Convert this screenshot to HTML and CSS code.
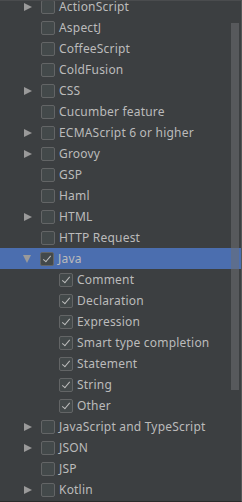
FILE: index.html
```html
<!DOCTYPE html>
<html>
<head>
  <link rel="stylesheet" href="styles.css">
</head>
<body>
  <div class="panel">
    <div class="tree">
      <div class="row"><span class="arrow right"></span><span class="box"></span><span class="label">ActionScript</span></div>
      <div class="row"><span class="arrow"></span><span class="box"></span><span class="label">AspectJ</span></div>
      <div class="row"><span class="arrow"></span><span class="box"></span><span class="label">CoffeeScript</span></div>
      <div class="row"><span class="arrow"></span><span class="box"></span><span class="label">ColdFusion</span></div>
      <div class="row"><span class="arrow right"></span><span class="box"></span><span class="label">CSS</span></div>
      <div class="row"><span class="arrow"></span><span class="box"></span><span class="label">Cucumber feature</span></div>
      <div class="row"><span class="arrow right"></span><span class="box"></span><span class="label">ECMAScript 6 or higher</span></div>
      <div class="row"><span class="arrow right"></span><span class="box"></span><span class="label">Groovy</span></div>
      <div class="row"><span class="arrow"></span><span class="box"></span><span class="label">GSP</span></div>
      <div class="row"><span class="arrow"></span><span class="box"></span><span class="label">Haml</span></div>
      <div class="row"><span class="arrow right"></span><span class="box"></span><span class="label">HTML</span></div>
      <div class="row"><span class="arrow"></span><span class="box"></span><span class="label">HTTP Request</span></div>
      <div class="row selected"><span class="arrow down"></span><span class="box checked"></span><span class="label">Java</span></div>
      <div class="row child"><span class="box checked"></span><span class="label">Comment</span></div>
      <div class="row child"><span class="box checked"></span><span class="label">Declaration</span></div>
      <div class="row child"><span class="box checked"></span><span class="label">Expression</span></div>
      <div class="row child"><span class="box checked"></span><span class="label">Smart type completion</span></div>
      <div class="row child"><span class="box checked"></span><span class="label">Statement</span></div>
      <div class="row child"><span class="box checked"></span><span class="label">String</span></div>
      <div class="row child"><span class="box checked"></span><span class="label">Other</span></div>
      <div class="row"><span class="arrow right"></span><span class="box"></span><span class="label">JavaScript and TypeScript</span></div>
      <div class="row"><span class="arrow right"></span><span class="box"></span><span class="label">JSON</span></div>
      <div class="row"><span class="arrow"></span><span class="box"></span><span class="label">JSP</span></div>
      <div class="row"><span class="arrow right"></span><span class="box"></span><span class="label">Kotlin</span></div>
    </div>
    <div class="scroll-thumb"></div>
  </div>
</body>
</html>
```

FILE: styles.css
```css
:root {
  --bg: #3c3f41;
  --text: #bbbbbb;
  --selected: #4b6eaf;
  --box-border: #636566;
  --box-fill: #43494a;
  --arrow: #9a9a9a;
}

body {
  margin: 0;
  background: var(--bg);
  font-family: "Noto Sans", "Open Sans", sans-serif;
  font-size: 12px;
  letter-spacing: 0.2px;
  color: var(--text);
}

.panel {
  position: relative;
  width: 241px;
  height: 500px;
  overflow: hidden;
  background: var(--bg);
  border-right: 1px solid #555758;
  border-bottom: 1px solid #2b2b2b;
  border-top: 1px solid #4a4c4e;
  box-sizing: content-box;
}

.tree {
  margin-top: -5px;
}

.row {
  display: flex;
  align-items: center;
  height: 21px;
  padding-left: 23px;
}

.row.child {
  padding-left: 59px;
}

.row.selected {
  background: var(--selected);
}

.arrow {
  width: 9px;
  height: 9px;
  margin-right: 9px;
  flex: none;
}

.arrow.right {
  width: 0;
  height: 0;
  border-top: 4.5px solid transparent;
  border-bottom: 4.5px solid transparent;
  border-left: 8px solid var(--arrow);
  margin-left: 1px;
  margin-right: 9px;
}

.arrow.down {
  width: 0;
  height: 0;
  border-left: 4.5px solid transparent;
  border-right: 4.5px solid transparent;
  border-top: 8px solid var(--arrow);
  margin-right: 9px;
}

.box {
  width: 12px;
  height: 12px;
  border: 1px solid var(--box-border);
  border-radius: 2px;
  background: var(--box-fill);
  margin-right: 4px;
  flex: none;
  position: relative;
}

.box.checked::after {
  content: "";
  position: absolute;
  left: 4px;
  top: 1px;
  width: 3px;
  height: 7px;
  border-right: 1.5px solid #bdbdbd;
  border-bottom: 1.5px solid #bdbdbd;
  transform: rotate(40deg);
}

.label {
  white-space: nowrap;
}

.scroll-thumb {
  position: absolute;
  left: 231px;
  top: 22px;
  width: 8px;
  height: 367px;
  background: rgba(110, 112, 114, 0.55);
}
```
